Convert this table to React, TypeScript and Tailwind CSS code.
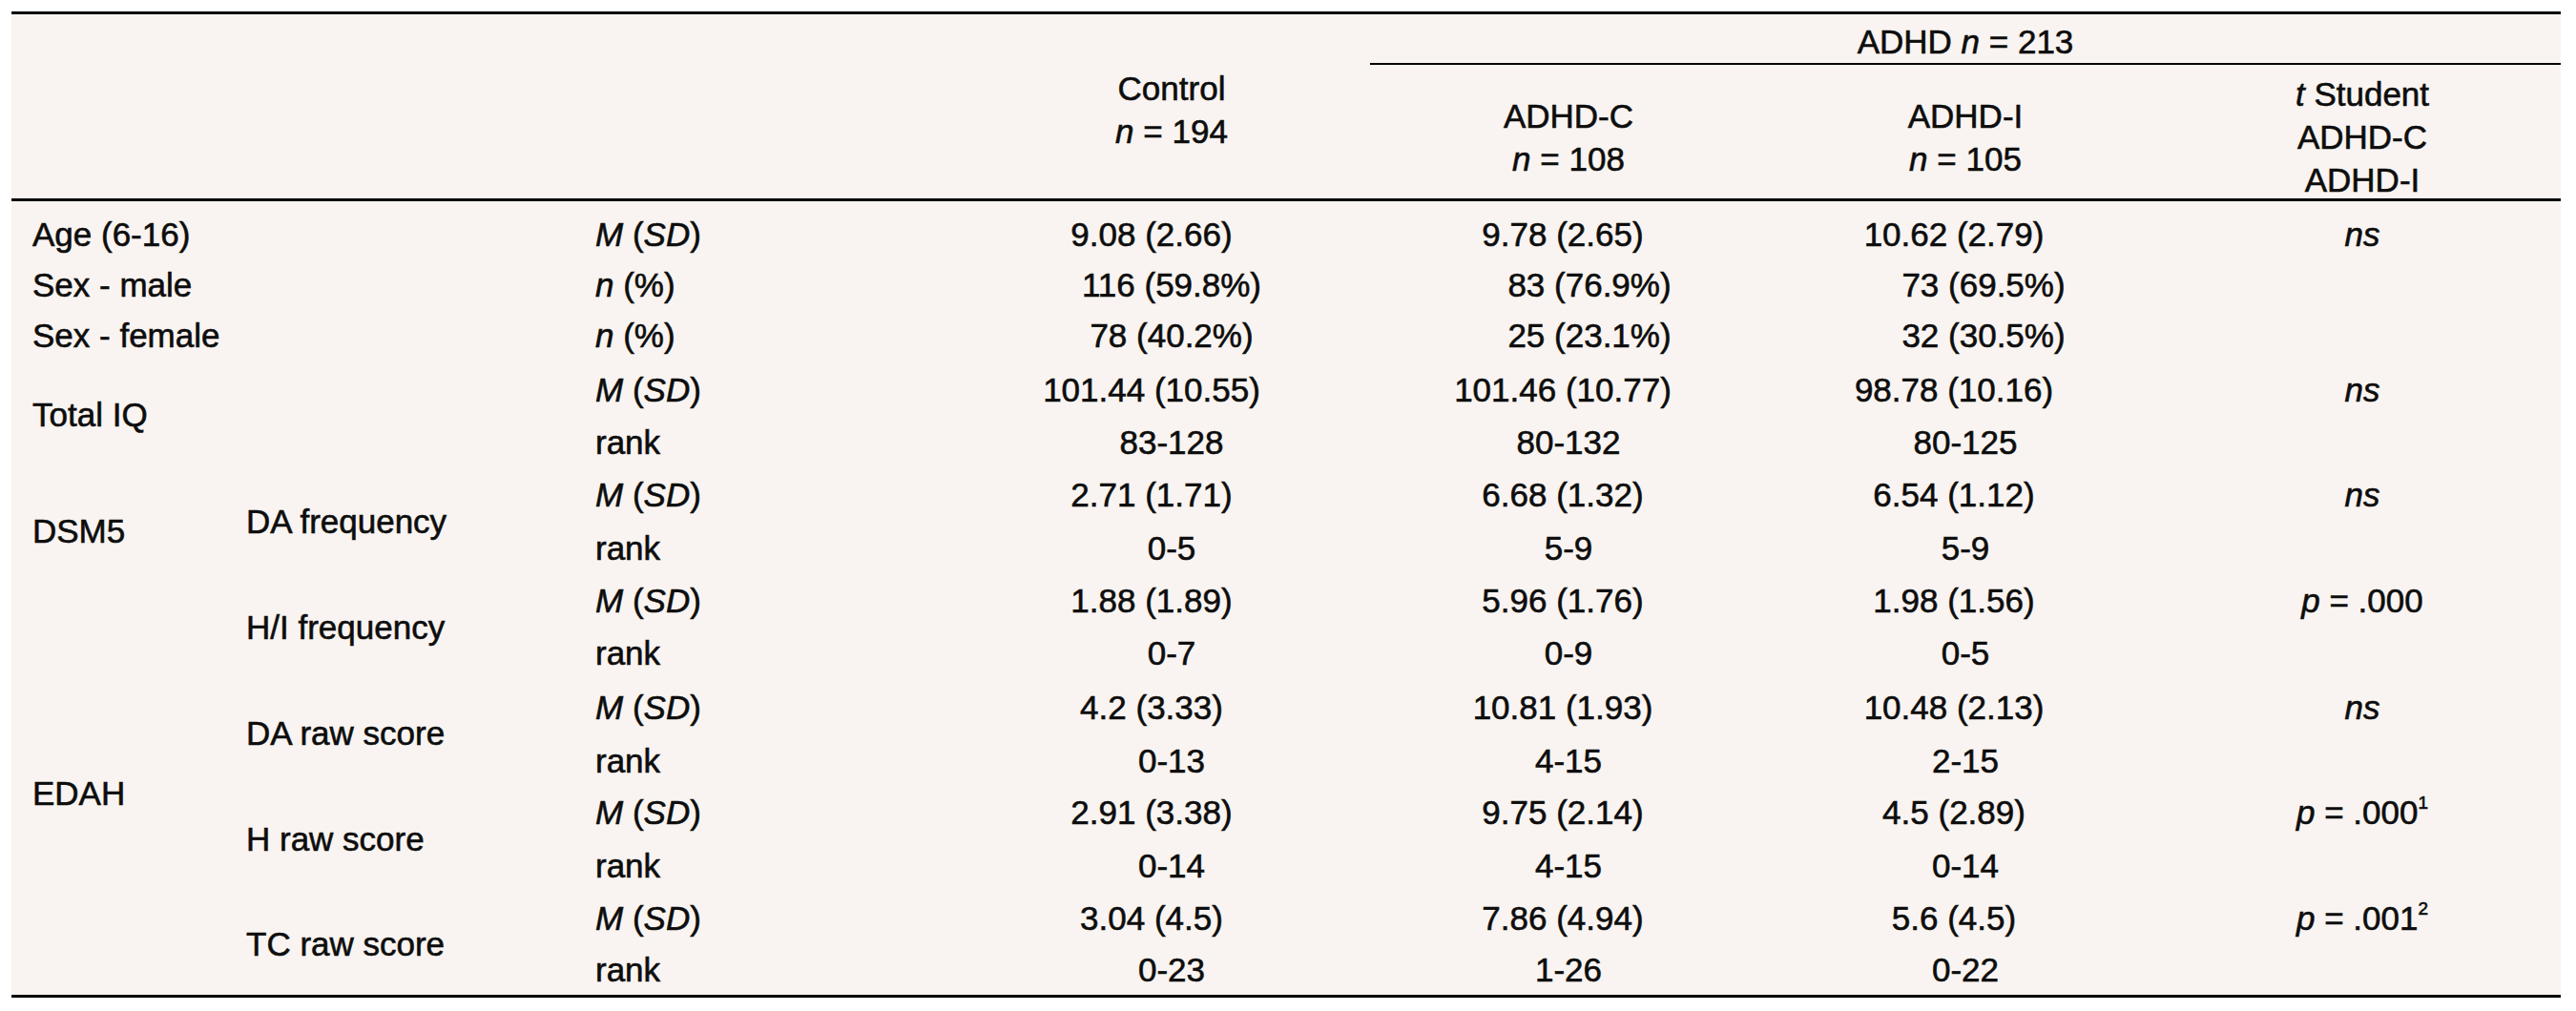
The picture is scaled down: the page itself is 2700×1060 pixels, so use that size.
import type { ReactNode } from "react";

const SKIP = "skip";

type Cell = string | { text: string; cls: string };

type Row = {
    a: Cell;
    b: Cell;
    kind: "m" | "n" | "r";
    v: string[];
    t?: ReactNode;
};

const rows: Row[] = [
    { a: "Age (6-16)", b: "", kind: "m", v: ["9.08 (2.66)", "9.78 (2.65)", "10.62 (2.79)"], t: <i>ns</i> },
    { a: "Sex - male", b: "", kind: "n", v: ["116 (59.8%)", "83 (76.9%)", "73 (69.5%)"] },
    { a: "Sex - female", b: "", kind: "n", v: ["78 (40.2%)", "25 (23.1%)", "32 (30.5%)"] },
    { a: { text: "Total IQ", cls: "row-span-2 items-center" }, b: "", kind: "m", v: ["101.44 (10.55)", "101.46 (10.77)", "98.78 (10.16)"], t: <i>ns</i> },
    { a: SKIP, b: "", kind: "r", v: ["83-128", "80-132", "80-125"] },
    { a: { text: "DSM5", cls: "row-span-4 items-start pt-[44px]" }, b: { text: "DA frequency", cls: "row-span-2 items-center" }, kind: "m", v: ["2.71 (1.71)", "6.68 (1.32)", "6.54 (1.12)"], t: <i>ns</i> },
    { a: SKIP, b: SKIP, kind: "r", v: ["0-5", "5-9", "5-9"] },
    { a: SKIP, b: { text: "H/I frequency", cls: "row-span-2 items-center" }, kind: "m", v: ["1.88 (1.89)", "5.96 (1.76)", "1.98 (1.56)"], t: <><i>p</i>&nbsp;= .000</> },
    { a: SKIP, b: SKIP, kind: "r", v: ["0-7", "0-9", "0-5"] },
    { a: { text: "EDAH", cls: "row-span-6 items-start pt-[96px]" }, b: { text: "DA raw score", cls: "row-span-2 items-center" }, kind: "m", v: ["4.2 (3.33)", "10.81 (1.93)", "10.48 (2.13)"], t: <i>ns</i> },
    { a: SKIP, b: SKIP, kind: "r", v: ["0-13", "4-15", "2-15"] },
    { a: SKIP, b: { text: "H raw score", cls: "row-span-2 items-center" }, kind: "m", v: ["2.91 (3.38)", "9.75 (2.14)", "4.5 (2.89)"], t: <><i>p</i>&nbsp;= .000<sup className="text-[19px]">1</sup></> },
    { a: SKIP, b: SKIP, kind: "r", v: ["0-14", "4-15", "0-14"] },
    { a: SKIP, b: { text: "TC raw score", cls: "row-span-2 items-center" }, kind: "m", v: ["3.04 (4.5)", "7.86 (4.94)", "5.6 (4.5)"], t: <><i>p</i>&nbsp;= .001<sup className="text-[19px]">2</sup></> },
    { a: SKIP, b: SKIP, kind: "r", v: ["0-23", "1-26", "0-22"] },
];

// small offsets so values sit like in the printed table
const mShift = ["pr-[42px]", "pr-[12px]", "pr-[24px]"];
const nShift = ["", "pl-[44px]", "pl-[38px]"];

function LabelCell({ cell, first }: { cell: Cell; first?: boolean }) {
    if (cell === SKIP) return null;
    const pad = first ? "pl-[22px]" : "";
    if (typeof cell === "string") {
        return <div className={`flex items-center ${pad}`}>{cell}</div>;
    }
    return <div className={`flex ${cell.cls} ${pad}`}>{cell.text}</div>;
}

function Stat({ kind }: { kind: Row["kind"] }) {
    if (kind === "m") return <span><i>M</i> (<i>SD</i>)</span>;
    if (kind === "n") return <span><i>n</i> (%)</span>;
    return <span>rank</span>;
}

function App() {
    return (
        <div className="w-[2700px] h-[1060px] bg-white pt-[12px] pl-[12px] text-[#0d0d0d] [-webkit-text-stroke:0.6px_#0d0d0d] font-['Liberation_Sans',Arial,sans-serif] text-[35px] leading-[45px]">
            <div className="w-[2672px] bg-[#f9f4f1] border-t-[3px] border-b-[3px] border-black">
                <div className="grid grid-cols-[246px_366px_396px_416px_416px_416px_416px] grid-rows-[53px_140px] border-b-[3px] border-black">
                    <div className="row-span-2"></div>
                    <div className="row-span-2"></div>
                    <div className="row-span-2"></div>
                    <div className="row-span-2 flex flex-col items-center justify-center pt-[7px]">
                        <span>Control</span>
                        <span><i>n</i> = 194</span>
                    </div>
                    <div className="col-span-3 flex items-center justify-center pt-[5px] border-b-2 border-black">
                        <span>ADHD <i>n</i> = 213</span>
                    </div>
                    <div className="flex flex-col items-center justify-center pt-[12px]">
                        <span>ADHD-C</span>
                        <span><i>n</i> = 108</span>
                    </div>
                    <div className="flex flex-col items-center justify-center pt-[12px]">
                        <span>ADHD-I</span>
                        <span><i>n</i> = 105</span>
                    </div>
                    <div className="flex flex-col items-center justify-center pt-[10px]">
                        <span><i>t</i> Student</span>
                        <span>ADHD-C</span>
                        <span>ADHD-I</span>
                    </div>
                </div>
                <div className="pt-[7px]">
                    <div className="grid grid-cols-[246px_366px_396px_416px_416px_416px_416px] grid-rows-[55px_51px_55px_58px_53px_56px_56px_54px_57px_57px_54px_55px_56px_54px_54px]">
                        {rows.map((r, i) => (
                            <div key={i} className="contents">
                                <LabelCell cell={r.a} first />
                                <LabelCell cell={r.b} />
                                <div className="flex items-center">
                                    <Stat kind={r.kind} />
                                </div>
                                {r.v.map((val, j) => (
                                    <div
                                        key={j}
                                        className={`flex items-center justify-center ${r.kind === "m" ? mShift[j] : r.kind === "n" ? nShift[j] : ""}`}
                                    >
                                        {val}
                                    </div>
                                ))}
                                <div className="flex items-center justify-center">
                                    {r.t}
                                </div>
                            </div>
                        ))}
                    </div>
                </div>
            </div>
        </div>
    );
}

export default App;
